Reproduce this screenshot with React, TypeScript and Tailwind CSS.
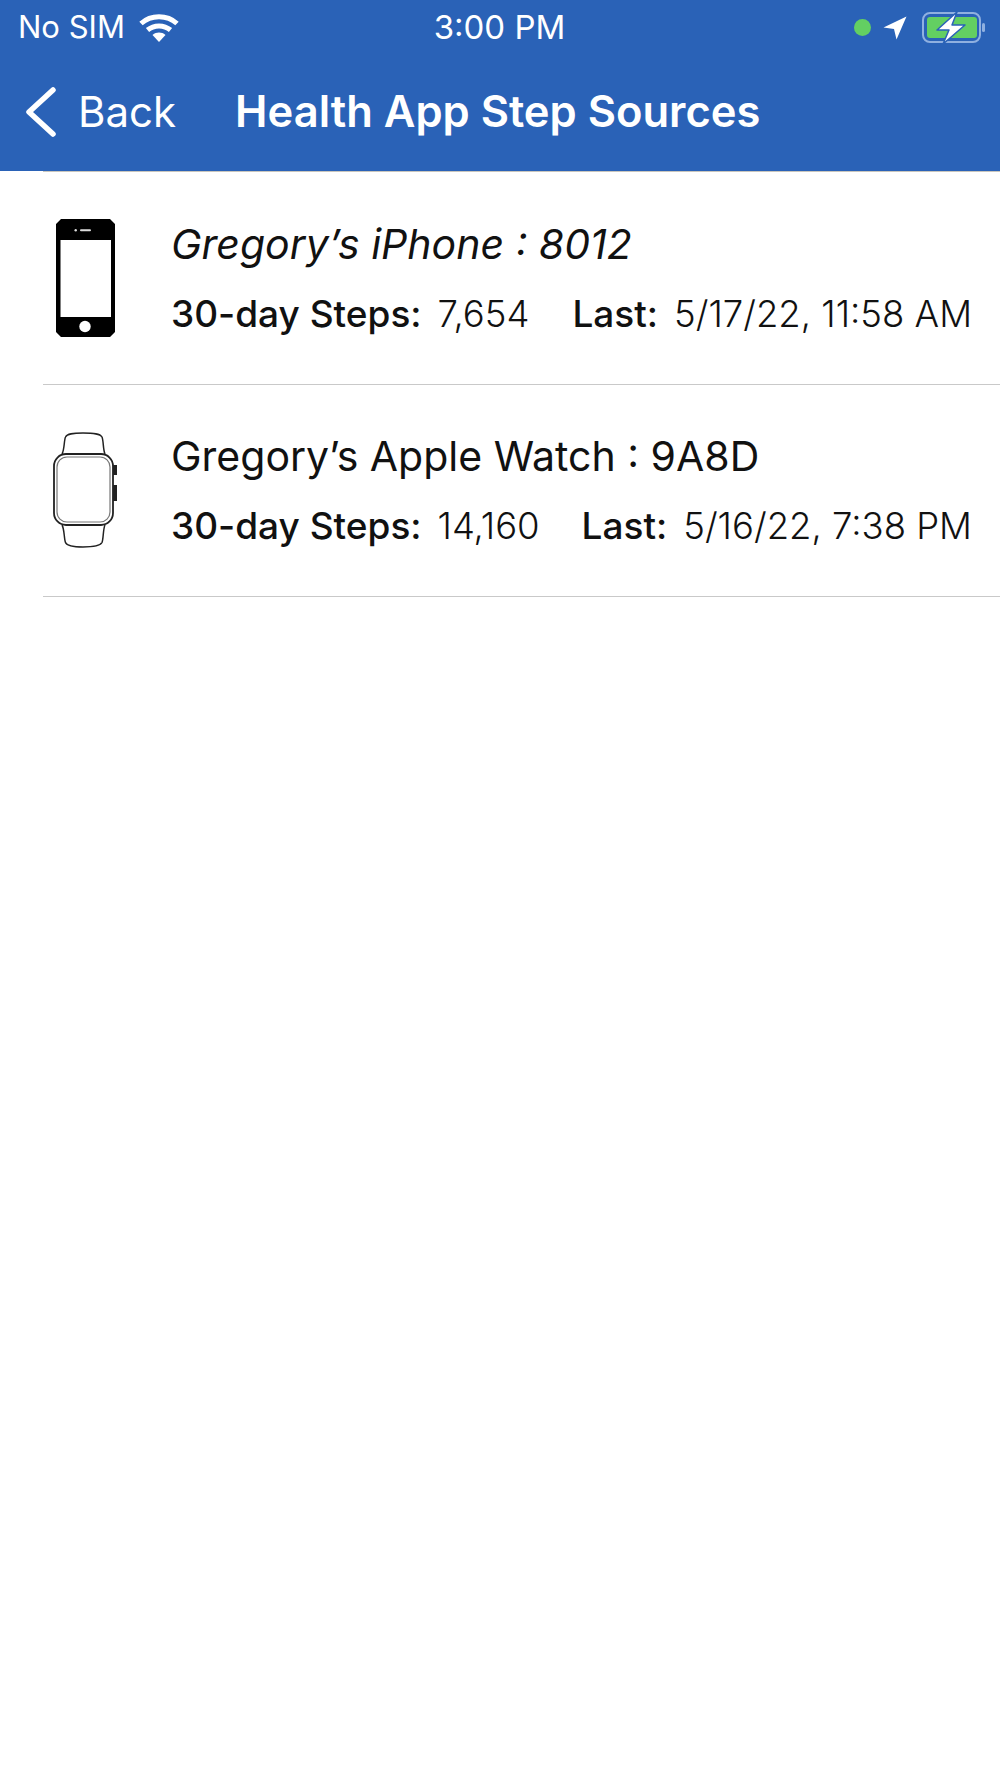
import React from 'react';

const sources = [
  { id: 'phone', name: 'Gregory’s iPhone : 8012', italic: true, steps: '7,654', last: '5/17/22, 11:58 AM' },
  { id: 'watch', name: 'Gregory’s Apple Watch : 9A8D', italic: false, steps: '14,160', last: '5/16/22, 7:38 PM' },
];

function PhoneIcon() {
  return (
    <svg width="59" height="118" viewBox="0 0 59 118">
      <path fillRule="evenodd" fill="#000" d="M5 0H54L59 5V113L54 118H5L0 113V5ZM4.500 21V98H55V21Z" />
      <circle cx="29" cy="107.500" r="5.700" fill="#fff" />
      <rect x="24" y="10.200" width="11" height="2" rx="1" fill="#ddd" />
      <circle cx="19.700" cy="11.200" r="1.200" fill="#ddd" />
    </svg>
  );
}

function WatchIcon() {
  return (
    <svg width="65" height="116" viewBox="0 0 65 116" fill="none" stroke="#222">
      <rect x="1" y="22" width="59" height="71" rx="12" strokeWidth="1.800" />
      <rect x="4" y="25" width="53" height="65" rx="10" strokeWidth="1.200" stroke="#777" />
      <path strokeWidth="1.500" d="M9 22C11.500 18 11 8 12.500 5C14 1.500 20 1 30 1C41 1 47 1.500 49 5C50.500 8 50 18 52 22" />
      <path strokeWidth="1.500" d="M9 93C11.500 97 11 107 12.500 110.500C14 114 20 115 30 115C41 115 47 114 49 110.500C50.500 107 50 97 52 93" />
      <rect x="60" y="33" width="4" height="10" fill="#222" stroke="none" />
      <rect x="60" y="53" width="4" height="16" fill="#222" stroke="none" />
    </svg>
  );
}

function SourceRow({ source }: { source: (typeof sources)[number] }) {
  return (
    <div className="flex h-[212.5px] items-center border-b border-[#c9c9c9] pr-[28px]">
      <div className="flex w-[84px] justify-center">
        {source.id === 'phone' ? <PhoneIcon /> : <WatchIcon />}
      </div>
      <div className="ml-[44px] flex-1 pb-[3px] pt-[2px]">
        <div className={`text-[41px] leading-[46px] text-[#111] ${source.italic ? 'italic' : ''}`}>
          {source.name}
        </div>
        <div className="mt-[27px] flex justify-between text-[36.500px] leading-[40px] text-[#111]">
          <div className="flex gap-[16px]">
            <span className="text-[37px] font-medium">30-day Steps:</span>
            <span className="font-light">{source.steps}</span>
          </div>
          <div className="flex gap-[16px]">
            <span className="text-[37px] font-medium">Last:</span>
            <span className="font-light">{source.last}</span>
          </div>
        </div>
      </div>
    </div>
  );
}

export default function App() {
  return (
    <div className="min-h-[1778px] bg-white font-['Inter',sans-serif]">
      <header className="h-[171px] bg-[#2a62b7] text-white">
        <div className="grid h-[54px] grid-cols-3 items-center pl-[18px] pr-[14px] pt-[1px] text-[31px]">
          <div className="flex items-center gap-[14px] whitespace-nowrap">
            <span>No SIM</span>
            <svg width="40" height="28" viewBox="0 0 40 28" fill="none" stroke="#fff" strokeWidth="5">
              <path d="M2 9.500C12 0.500 28 0.500 38 9.500" />
              <path d="M8.500 16C15 10.500 25 10.500 31.500 16" />
              <path fill="#fff" stroke="none" d="M13.500 21C17.500 17.800 22.500 17.800 26.500 21L20 28Z" />
            </svg>
          </div>
          <div className="pr-[5px] text-center text-[33px]">3:00 PM</div>
          <div className="flex items-center justify-end">
            <span className="h-[17px] w-[17px] rounded-full bg-[#63cf62]" />
            <svg className="ml-[12px]" width="24" height="24" viewBox="0 0 24 24" fill="#fff">
              <path d="M23.500 0.500L13.500 23.500L11 13L0.500 11.500Z" />
            </svg>
            <svg className="ml-[15px]" width="64" height="32" viewBox="0 0 64 32">
              <rect x="1" y="1" width="57" height="29" rx="7" fill="none" stroke="#8fb0e0" strokeWidth="2" />
              <rect x="5" y="5" width="50" height="21" rx="3" fill="#63cf62" />
              <rect x="60" y="11" width="3" height="9" rx="1.500" fill="#8fb0e0" />
              <path fill="#fff" stroke="#2a62b7" strokeWidth="1.500" strokeLinejoin="round" d="M35 0L15 18H27L21 32L43 13H30Z" />
            </svg>
          </div>
        </div>
        <div className="flex h-[117px] items-center pb-[2px] pl-[25px]">
          <svg width="32" height="50" viewBox="0 0 32 50" fill="none" stroke="#fff" strokeWidth="5.500" strokeLinecap="round" strokeLinejoin="round">
            <path d="M28 3L4 25L28 47" />
          </svg>
          <span className="ml-[21px] text-[42px]">Back</span>
          <span className="ml-[59px] text-[43.500px] font-semibold">Health App Step Sources</span>
        </div>
      </header>
      <div className="ml-[43px] border-t border-[#c9c6bd]">
        {sources.map(s => (
          <SourceRow key={s.id} source={s} />
        ))}
      </div>
    </div>
  );
}
